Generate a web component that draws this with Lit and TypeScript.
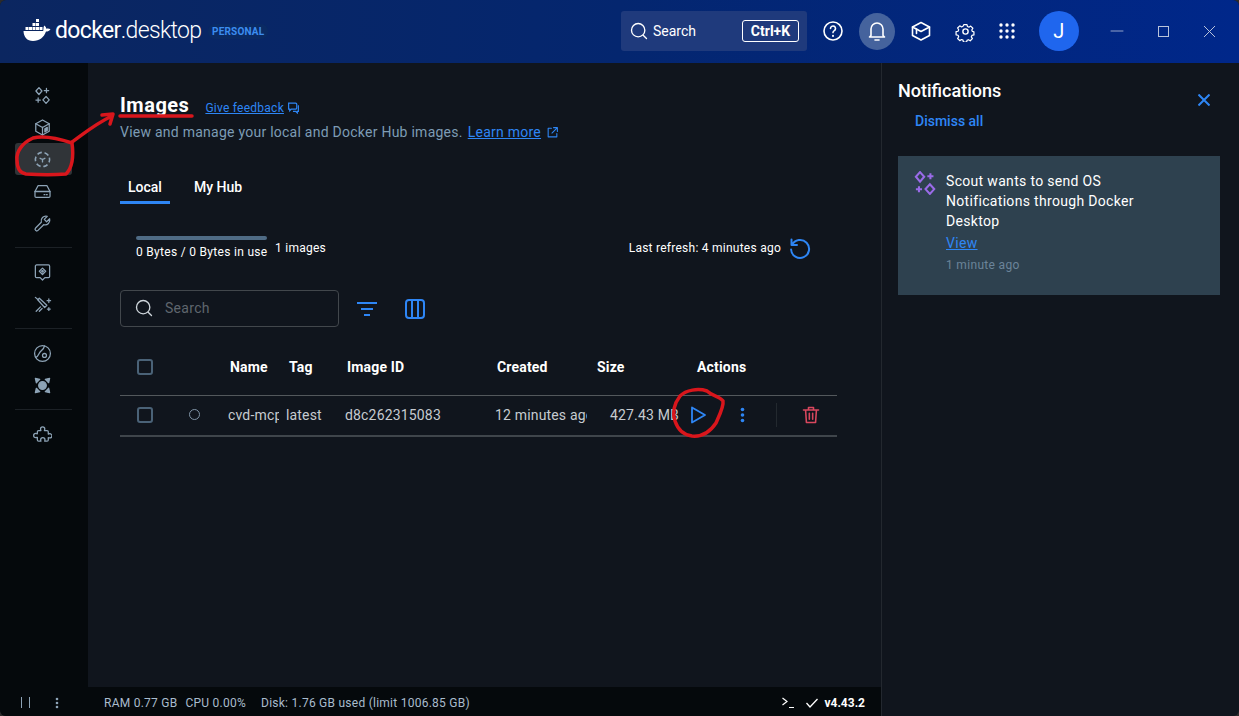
import { LitElement, html, css, svg, TemplateResult } from 'lit';
import { customElement } from 'lit/decorators.js';

const icon = (size: number, body: TemplateResult, cls = '') => html`<svg class=${cls} width=${size} height=${size} viewBox="0 0 24 24" fill="none" stroke="currentColor" stroke-width="1.6" stroke-linecap="round" stroke-linejoin="round">${body}</svg>`;

const sparkles = svg`<path d="M7.500 2l3.800 4.300-3.800 4.400-3.800-4.400z"/><path d="M16.500 13.200l4 4.400-4 4.400-4-4.400z"/><path d="M17 3v5.500M14.200 5.800h5.600M6.500 15v5.500M3.700 17.800h5.600"/>`;

const sideTop = [
  sparkles,
  svg`<path d="M12 2.500l8.500 4.700v9.600L12 21.500l-8.500-4.700V7.200z"/><path d="M3.500 7.200l8.500 4.800 8.500-4.800M12 12v9.500"/><path d="M15 13.500l3-1.700v4l-3 1.700z" fill="currentColor"/>`,
  svg`<circle cx="12" cy="12" r="9" stroke-width="2" stroke-dasharray="6 3.420" stroke-linecap="butt" transform="rotate(-15 12 12)"/><path d="M9 10.500l3 1.500 3-1.500M12 12v3" stroke-width="1.700"/>`,
  svg`<path d="M6.500 4.500h11L21.500 12v6a1.500 1.500 0 0 1-1.500 1.500H4A1.500 1.500 0 0 1 2.500 18v-6z"/><path d="M2.500 12h19M14 16h1M17 16h1"/>`,
  svg`<path d="M21 6l-3.800 3.800-3-3L18 3a6 6 0 0 0-7.500 7.500L3.300 17.700a2.100 2.100 0 0 0 3 3l7.200-7.200A6 6 0 0 0 21 6z"/>`,
];
const sideMid = [
  svg`<path d="M4.500 2.500h15A1.500 1.500 0 0 1 21 4v13a1.500 1.500 0 0 1-1.500 1.500H15L12 21.500 9 18.500H4.500A1.500 1.500 0 0 1 3 17V4a1.500 1.500 0 0 1 1.500-1.500z"/><path d="M12 6.500l4 4-4 4-4-4z"/><circle cx="12" cy="10.500" r="1" fill="currentColor"/>`,
  svg`<path d="M8 4l9.500 9-2.800 2.800L6 6z"/><path d="M3 3l3.500 3M9.500 15L4 20.500M11.500 17l-3.500 3.500"/><path d="M20 5v4.500M17.800 7.200h4.400M20 16v3.500M18.200 17.800h3.600"/>`,
];
const sideLow = [
  svg`<circle cx="12" cy="12" r="10"/><path d="M3.500 17c4-1 3.500-6 6.500-8s4-3.500 4.500-6.700"/><circle cx="14.500" cy="14.500" r="2.500"/>`,
  svg`<circle cx="12" cy="12" r="4.800" fill="currentColor"/><path d="M3 3l5.500 1.200-4.300 4.300zM21 3l-1.200 5.500-4.300-4.300zM3 21l1.200-5.500 4.300 4.300zM21 21l-5.500-1.200 4.300-4.300z" fill="currentColor"/>`,
];
const sideExt = svg`<path d="M9.500 5a2.700 2.700 0 0 1 5.400 0c0 .9-.5 1.400-.5 2h3.400a1.500 1.500 0 0 1 1.500 1.500v3c.6 0 1.100-.5 1.900-.5a2.700 2.700 0 0 1 0 5.400c-.8 0-1.300-.5-1.900-.5v3.100a1.500 1.500 0 0 1-1.500 1.500h-3c0-.6.300-1.100.3-1.800a2.700 2.700 0 0 0-5.400 0c0 .7.300 1.200.3 1.800H7a1.500 1.500 0 0 1-1.500-1.500v-3.500c-.6 0-1.100.5-2 .5a2.700 2.700 0 0 1 0-5.400c.9 0 1.400.5 2 .5V8.500A1.500 1.500 0 0 1 7 7h3c0-.6-.5-1.100-.5-2z"/>`;

@customElement('app-root')
export class AppRoot extends LitElement {
  static styles = css`
    :host {
      display: block;
      position: relative;
      width: 100%;
      height: 100vh;
      overflow: hidden;
      background: #2b2b2b;
      color: #fff;
      font-family: Roboto, "Liberation Sans", sans-serif;
      font-size: 14px;
      letter-spacing: 0.25px;
    }
    svg { display: block; flex: none; }
    a { color: #2e86f5; text-decoration: underline; }

    .app { display: flex; flex-direction: column; height: 100%; background: #10151d; border-radius: 6px; overflow: hidden; }

    /* title bar */
    .top {
      flex: none;
      height: 63px;
      box-sizing: border-box;
      padding: 0 0 1px 23px;
      display: flex;
      align-items: center;
      background: linear-gradient(90deg, #0b2660 0%, #04266f 50%, #00278a 100%);
    }
    .whale { margin: 0 4px 2px 0; }
    .logo { font-size: 23px; letter-spacing: -0.65px; font-weight: 400; width: 146px; line-height: 24px; }
    .logo span { font-weight: 300; }
    .plan {
      margin-left: 7px;
      padding: 2px 4px;
      border-radius: 7px;
      background: #0a2a63;
      color: #3c8df0;
      font-size: 10px;
      font-weight: 700;
      letter-spacing: 0.2px;
      line-height: 11px;
    }
    .top-search {
      margin-left: auto;
      width: 186px;
      height: 40px;
      box-sizing: border-box;
      padding: 0 8px;
      display: flex;
      align-items: center;
      gap: 4px;
      border-radius: 3px;
      background: #1f3a7c;
      letter-spacing: 0;
    }
    .top-search .kbd {
      margin-left: auto;
      width: 57px;
      height: 22px;
      box-sizing: border-box;
      border: 1px solid #fff;
      border-radius: 3px;
      display: flex;
      align-items: center;
      justify-content: center;
      font-weight: 700;
      font-size: 14px;
    }
    .top-icons { display: flex; align-items: center; margin-left: 8px; }
    .top-btn { width: 36px; height: 37px; margin-right: 8px; display: flex; align-items: center; justify-content: center; border-radius: 50%; }
    .top-btn.on { background: #45639d; }
    .top-btn.gear { margin-right: 6px; }
    .top-btn.apps { margin-right: 0; }
    .avatar {
      width: 40px;
      height: 40px;
      margin-left: 14px;
      border-radius: 50%;
      background: #1f66ee;
      display: flex;
      align-items: center;
      justify-content: center;
      font-size: 20px;
    }
    .win { display: flex; align-items: center; margin-left: 15px; margin-right: 7px; color: #b9c3da; }
    .win div { width: 46px; display: flex; justify-content: center; }

    .body { flex: 1; min-height: 0; display: flex; }

    /* left rail */
    .rail {
      flex: none;
      width: 88px;
      box-sizing: border-box;
      padding: 16px 16px 0 15px;
      background: #05090c;
      color: #8da3b6;
      display: flex;
      flex-direction: column;
    }
    .rail-item { height: 32px; padding-right: 3px; display: flex; align-items: center; justify-content: center; border-radius: 3px; }
    .rail-item.on { background: #303438; }
    .rail hr { width: 100%; height: 1px; margin: 8px 0; border: 0; background: #1c2126; }
    .rail-foot { margin: auto -15px 0; height: 29px; padding: 2px 0 0 21px; box-sizing: border-box; display: flex; align-items: center; gap: 25px; }
    .rail-foot .bars { width: 9px; height: 11px; border-left: 1px solid #8da3b6; border-right: 1px solid #8da3b6; box-sizing: border-box; }

    /* centre column */
    .centre { flex: none; width: 793px; display: flex; flex-direction: column; min-width: 0; }
    .main { flex: 1; padding: 30px 44px 0 32px; }
    .title-row { display: flex; align-items: baseline; height: 24px; }
    h1 { margin: 0; font-size: 20px; font-weight: 700; line-height: 24px; letter-spacing: 0.5px; }
    .feedback { margin-left: 16px; font-size: 12px; }
    .feedback-icon { margin-left: 3px; align-self: center; color: #2e86f5; transform: translateY(2px); }
    .sub { margin-top: 5px; display: flex; align-items: center; color: #7d9cb5; line-height: 20px; }
    .sub a { margin-left: 5px; }
    .sub svg { margin-left: 5px; color: #2e86f5; }

    .tabs { margin-top: 29px; display: flex; height: 33px; font-weight: 500; letter-spacing: 0; }
    .tab { padding: 7px 8px 0; box-sizing: border-box; line-height: 18px; }
    .tab.on { width: 50px; border-bottom: 3px solid #2e86f5; }
    .tab + .tab { margin-left: 16px; }

    .stats { margin-top: 32px; height: 28px; display: flex; font-size: 12px; padding-left: 16px; }
    .usage { width: 131px; }
    .usage-bar { height: 4px; margin-bottom: 5px; border-radius: 2px; background: #4f6b85; }
    .usage-text { white-space: nowrap; line-height: 14px; letter-spacing: 0.3px; }
    .count { margin-left: 8px; margin-top: 5px; line-height: 14px; }
    .refresh { margin-left: auto; margin-right: 25px; display: flex; align-items: center; gap: 7px; height: 24px; }

    .filter-row { margin-top: 26px; display: flex; align-items: center; }
    .search {
      width: 219px;
      height: 37px;
      box-sizing: border-box;
      padding: 0 0 1px 13px;
      display: flex;
      align-items: center;
      gap: 11px;
      border: 1px solid #42474c;
      border-radius: 4px;
      color: #cfd6dc;
    }
    .search span { color: #5f666d; letter-spacing: 0.3px; }
    .blue { color: #2e86f5; }
    .filter-row .f { margin-left: 18px; }
    .filter-row .c { margin-left: 28px; }

    .row {
      display: grid;
      grid-template-columns: 50px 58px 58px 59px 150px 100px 84px 158px;
      align-items: center;
      letter-spacing: 0.17px;
    }
    .head { margin-top: 20px; height: 40px; padding-bottom: 8px; border-bottom: 1px solid #53585c; font-weight: 700; }
    .head > span { padding-left: 2px; }
    .head > span.tag { padding-left: 3px; }
    .head > span.act { padding-left: 18px; }
    .item { height: 38px; padding-bottom: 1px; border-bottom: 2px solid #3f454b; color: #c6cbd0; }
    .item > span { overflow: hidden; white-space: nowrap; }
    .item .name { width: 51px; }
    .item .created { width: 92px; }
    .item .size { padding-left: 15px; }
    .check { width: 16px; height: 16px; margin-left: 17px; box-sizing: border-box; border: 2px solid #4a6277; border-radius: 3px; }
    .dot { width: 11px; height: 11px; margin-left: 19px; margin-top: -2px; box-sizing: border-box; border: 1px solid #7f93a5; border-radius: 50%; }
    .actions { display: flex; align-items: center; padding-left: 10px; }
    .actions .more { margin-left: 33px; }
    .actions .rule { width: 1px; height: 24px; margin-left: 31px; background: #23292f; }
    .actions .trash { margin-left: 24px; color: #d9475e; }

    .status {
      flex: none;
      height: 29px;
      box-sizing: border-box;
      padding: 2px 16px 0;
      display: flex;
      align-items: center;
      background: #05090c;
      color: #a9bccd;
      font-size: 12px;
    }
    .status .cpu { margin-left: 8px; }
    .status .disk { margin-left: 15px; }
    .status-end { margin-left: auto; display: flex; align-items: center; color: #fff; }
    .status-end b { margin-left: 6px; font-size: 12px; letter-spacing: 0; }
    .status-end .term { margin-right: 12px; }

    /* notifications */
    .notes { flex: 1; box-sizing: border-box; border-left: 1px solid #23282f; padding: 17px 19px 0 16px; letter-spacing: 0; }
    .notes-head { display: flex; justify-content: space-between; height: 22px; }
    .notes h2 { margin: 0; font-size: 18px; font-weight: 500; line-height: 22px; }
    .notes-close { margin: 14px 10px 0 0; color: #2e86f5; }
    .dismiss { margin: 9px 0 0 17px; color: #2e86f5; font-weight: 500; line-height: 20px; }
    .card {
      margin-top: 25px;
      height: 139px;
      box-sizing: border-box;
      padding: 15px 16px;
      display: flex;
      gap: 9px;
      background: #2e414f;
    }
    .spark { color: #9a6be8; }
    .msg { line-height: 20px; width: 200px; font-size: 14px; letter-spacing: 0.32px; }
    .view { display: block; margin-top: 2px; line-height: 20px; }
    .ago { display: block; margin-top: 5px; color: #6b8499; font-size: 12px; line-height: 14px; }

    /* hand-drawn markup on top of the screenshot */
    .ink { position: absolute; left: 0; top: 0; pointer-events: none; }
    .ink path { fill: none; stroke: #d9161c; stroke-width: 3.500; stroke-linecap: round; stroke-linejoin: round; }
  `;

  private railItem(body: TemplateResult, on = false) {
    return html`<div class="rail-item ${on ? 'on' : ''}">${icon(19, body)}</div>`;
  }

  render() {
    return html`
      <div class="app">
        <header class="top">
          <svg class="whale" width="28" height="24" viewBox="0 0 28 24" fill="#fff">
            <path d="M13 1h3v3h-3zM9.500 5h3v3h-3zM13 5h3v3h-3zM6 9h3v3H6zM9.500 9h3v3h-3zM13 9h3v3h-3zM16.500 9h3v3h-3zM2.500 9h3v3h-3z"/>
            <path d="M.500 13h19.700c.4-2 .1-4 1-5.500 1.300.7 2 2 2.100 3.300 1.300-.5 3-.3 4.200.5-.9 1.700-2.700 2.300-4.500 2.300C21 19.500 16.500 23 10 23 4 23 .7 19 .500 13z"/>
          </svg>
          <div class="logo">docker<span>.desktop</span></div>
          <div class="plan">PERSONAL</div>
          <div class="top-search">
            ${icon(20, svg`<circle cx="11" cy="11" r="8"/><path d="M17 17l4 4"/>`)}
            <span>Search</span>
            <span class="kbd">Ctrl+K</span>
          </div>
          <div class="top-icons">
            <div class="top-btn">${icon(24, svg`<circle cx="12" cy="12" r="9"/><path d="M9.500 9.500a2.500 2.500 0 1 1 3.800 2.100c-.8.500-1.300 1-1.300 2"/><path d="M12 16.800v.1" stroke-width="2"/>`)}</div>
            <div class="top-btn on">${icon(24, svg`<path d="M6 16.500V10a6 6 0 0 1 12 0v6.500l1.500 1.500h-15z"/><path d="M10 21h4"/>`)}</div>
            <div class="top-btn">${icon(24, svg`<path d="M12 3.500l8.500 4.500L12 12.500 3.500 8z"/><path d="M3.500 8v8.500L12 21l8.500-4.500V8M7.500 10v4.500"/>`)}</div>
            <div class="top-btn gear">${icon(21, svg`<circle cx="12" cy="12" r="3"/><path d="M10 3h4l.6 2.600 1.900.8 2.300-1.400 2.800 2.800-1.400 2.300.8 1.900 2 .5v4l-2.600.6-.8 1.900 1.400 2.300-2.800 2.800-2.300-1.400-1.900.8-.6 2.400h-4l-.6-2.600-1.900-.8-2.300 1.400-2.800-2.800 1.400-2.300-.8-1.900-2.600-.6v-4l2.600-.6.800-1.900-1.400-2.300 2.800-2.800 2.300 1.400 1.900-.8z" transform="translate(1.400 1.400) scale(.88)"/>`)}</div>
            <div class="top-btn apps">
              <svg width="16" height="16" viewBox="0 0 16 16" fill="#fff">
                ${[2, 8, 14].flatMap((y) => [2, 8, 14].map((x) => svg`<circle cx=${x} cy=${y} r="1.700"/>`))}
              </svg>
            </div>
            <div class="avatar">J</div>
          </div>
          <div class="win">
            <div>${icon(16, svg`<path d="M3 12h18" stroke-width="1.200"/>`)}</div>
            <div><svg width="11" height="11" viewBox="0 0 11 11" fill="none" stroke="currentColor"><rect x=".5" y=".5" width="10" height="10"/></svg></div>
            <div><svg width="13" height="13" viewBox="0 0 13 13" fill="none" stroke="currentColor"><path d="M1 1l11 11M12 1L1 12"/></svg></div>
          </div>
        </header>

        <div class="body">
          <nav class="rail">
            ${sideTop.map((b, i) => this.railItem(b, i === 2))}
            <hr />
            ${sideMid.map((b) => this.railItem(b))}
            <hr />
            ${sideLow.map((b) => this.railItem(b))}
            <hr />
            ${this.railItem(sideExt)}
            <div class="rail-foot">
              <div class="bars"></div>
              <svg width="4" height="12" viewBox="0 0 4 12" fill="#8da3b6"><circle cx="2" cy="2" r="1.300"/><circle cx="2" cy="6" r="1.300"/><circle cx="2" cy="10" r="1.300"/></svg>
            </div>
          </nav>

          <div class="centre">
            <main class="main">
              <div class="title-row">
                <h1>Images</h1>
                <a class="feedback">Give feedback</a>
                <svg class="feedback-icon" width="13" height="13" viewBox="0 0 24 24" fill="none" stroke="currentColor" stroke-width="2.200"><path d="M3 4h13a2 2 0 0 1 2 2v7a2 2 0 0 1-2 2H8l-3 3v-3H3z"/><path d="M20 9h1v10h-2v3l-3-3h-5"/></svg>
              </div>
              <div class="sub">
                <span>View and manage your local and Docker Hub images.</span>
                <a>Learn more</a>
                ${icon(13, svg`<path d="M10 4H4v16h16v-6M14 3h7v7M21 3l-10 10" stroke-width="2"/>`)}
              </div>
              <div class="tabs">
                <div class="tab on">Local</div>
                <div class="tab">My Hub</div>
              </div>
              <div class="stats">
                <div class="usage">
                  <div class="usage-bar"></div>
                  <div class="usage-text">0 Bytes / 0 Bytes in use</div>
                </div>
                <div class="count">1 images</div>
                <div class="refresh">
                  <span>Last refresh: 4 minutes ago</span>
                  <svg class="blue" width="24" height="24" viewBox="0 0 24 24" fill="none" stroke="currentColor" stroke-width="2" stroke-linecap="round" stroke-linejoin="round"><path d="M4 9a9 9 0 1 1-.9 4.500M3.500 3.500V9H9"/></svg>
                </div>
              </div>
              <div class="filter-row">
                <div class="search">
                  ${icon(20, svg`<circle cx="11" cy="11" r="8"/><path d="M17 17l4 4"/>`)}
                  <span>Search</span>
                </div>
                <svg class="f blue" width="20" height="14" viewBox="0 0 20 14" fill="none" stroke="currentColor" stroke-width="2"><path d="M0 1h20M4 7h12M7 13h6"/></svg>
                <svg class="c blue" width="20" height="20" viewBox="0 0 20 20" fill="none" stroke="currentColor" stroke-width="2"><rect x="1" y="1" width="18" height="18" rx="3"/><path d="M7 1v18M13 1v18"/></svg>
              </div>

              <div class="row head">
                <div class="check"></div>
                <span></span>
                <span>Name</span>
                <span class="tag">Tag</span>
                <span>Image ID</span>
                <span>Created</span>
                <span>Size</span>
                <span class="act">Actions</span>
              </div>
              <div class="row item">
                <div class="check"></div>
                <div class="dot"></div>
                <span class="name">cvd-mcp</span>
                <span>latest</span>
                <span>d8c262315083</span>
                <span class="created">12 minutes ago</span>
                <span class="size">427.43 MB</span>
                <div class="actions">
                  <svg class="blue" width="18" height="18" viewBox="0 0 18 18" fill="none" stroke="currentColor" stroke-width="1.800" stroke-linejoin="round"><path d="M3 1.500L16 9 3 16.500z"/></svg>
                  <svg class="more blue" width="5" height="16" viewBox="0 0 5 16" fill="currentColor"><circle cx="2.500" cy="2.500" r="1.800"/><circle cx="2.500" cy="8" r="1.800"/><circle cx="2.500" cy="13.500" r="1.800"/></svg>
                  <div class="rule"></div>
                  <span class="trash">${icon(20, svg`<path d="M3 6h18M9 6V3h6v3M5.500 6l1 15h11l1-15M10 10v7M14 10v7" stroke-width="1.900"/>`)}</span>
                </div>
              </div>
            </main>
            <footer class="status">
              <span>RAM 0.77 GB</span>
              <span class="cpu">CPU 0.00%</span>
              <span class="disk">Disk: 1.76 GB used (limit 1006.85 GB)</span>
              <div class="status-end">
                <svg class="term" width="12" height="12" viewBox="0 0 12 12" fill="none" stroke="currentColor" stroke-width="1.200"><path d="M.5 1l4.500 3.500L.5 8M7 10.500h5"/></svg>
                <svg width="12" height="10" viewBox="0 0 12 10" fill="none" stroke="currentColor" stroke-width="1.300"><path d="M.5 5l3.500 4L11.500 1"/></svg>
                <b>v4.43.2</b>
              </div>
            </footer>
          </div>

          <aside class="notes">
            <div class="notes-head">
              <h2>Notifications</h2>
              <svg class="notes-close" width="12" height="12" viewBox="0 0 12 12" fill="none" stroke="currentColor" stroke-width="2"><path d="M.5.500l11 11M11.500.500l-11 11"/></svg>
            </div>
            <div class="dismiss">Dismiss all</div>
            <div class="card">
              <svg class="spark" width="23" height="24" viewBox="2.500 1 20 22" fill="none" stroke="currentColor" stroke-width="1.900">${sparkles}</svg>
              <div class="msg">
                Scout wants to send OS Notifications through Docker Desktop
                <a class="view">View</a>
                <span class="ago">1 minute ago</span>
              </div>
            </div>
          </aside>
        </div>
      </div>

      <svg class="ink" width="1239" height="716" viewBox="0 0 1239 716">
        <path d="M72 143C60 139 45 135 33 138C22 143 16 152 17 160C17 168 20 173 26 174C40 175 55 175 66 174C72 168 74 158 72 143"/>
        <path d="M72 142C82 135 95 124 112 116M102 115L113 114L110 124"/>
        <path d="M120 116L192 116"/>
        <path d="M707 391C698 388 686 390 680 396C674 404 672 412 675 421C678 430 684 435 692 436C702 437 710 432 716 423C720 414 724 406 723 401C720 396 712 396 707 391"/>
      </svg>
    `;
  }
}
